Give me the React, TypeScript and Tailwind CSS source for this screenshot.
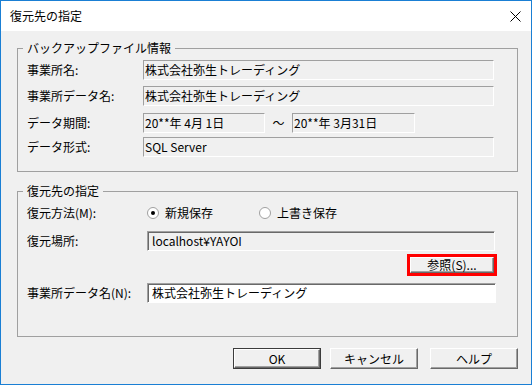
import React from 'react';

const fieldRo =
  'h-[20px] border border-t-[#a0a0a0] border-l-[#a0a0a0] border-r-white border-b-white bg-[#f0f0f0] pl-[1px] flex items-center text-[12px] leading-none';

const fieldSunken =
  'h-[20px] border border-t-[#a0a0a0] border-l-[#a0a0a0] border-r-white border-b-white shadow-[inset_1px_1px_0_#696969] pl-[4px] flex items-center text-[12px] leading-none';

function Group({ title, className, children }: { title: string; className: string; children: React.ReactNode }) {
  return (
    <div className={`relative border border-[#a0a0a0] ${className}`}>
      <span className="absolute -top-[9px] left-[5px] bg-[#f0f0f0] px-[4px] text-[12px] leading-[16px]">{title}</span>
      {children}
    </div>
  );
}

function Btn({ label, isDefault }: { label: string; isDefault?: boolean }) {
  return (
    <div className={`w-[88px] h-[21px] ${isDefault ? 'border border-[#3c3c3c]' : ''}`}>
      <button className="w-full h-full bg-[#f0f0f0] border border-t-white border-l-white border-r-[#696969] border-b-[#696969] shadow-[inset_-1px_-1px_0_#a0a0a0] text-[12px] leading-none flex items-center justify-center">
        {label}
      </button>
    </div>
  );
}

function Radio({ checked, label }: { checked?: boolean; label: string }) {
  return (
    <label className="flex items-center gap-[6px]">
      <span className="w-[12px] h-[12px] rounded-full border border-[#a0a0a0] bg-white flex items-center justify-center">
        {checked && <span className="w-[4px] h-[4px] rounded-full bg-black" />}
      </span>
      <span className="text-[12px]">{label}</span>
    </label>
  );
}

export default function App() {
  return (
    <div className="w-[532px] h-[385px] border border-[#1a7fd4] bg-[#f0f0f0] flex flex-col text-black font-['Noto_Sans_CJK_JP',sans-serif]">
      <div className="h-[30px] bg-white flex items-center justify-between pl-[9px] pr-[10px]">
        <span className="text-[12px]">復元先の指定</span>
        <svg width="11" height="11" viewBox="0 0 11 11" className="mt-[1px]">
          <path d="M0.5 0.5 L10.5 10.5 M10.5 0.5 L0.5 10.5" stroke="#000" strokeWidth="1" />
        </svg>
      </div>

      <div className="flex flex-col pl-[16px] pr-[13px]">
        <Group title="バックアップファイル情報" className="mt-[17px] h-[124px]">
          <div className="flex flex-col pl-[9px] pt-[11px] text-[12px]">
            <div className="flex items-center">
              <span className="w-[116px]">事業所名:</span>
              <div className={`${fieldRo} w-[351px]`}>株式会社弥生トレーディング</div>
            </div>
            <div className="flex items-center mt-[6px]">
              <span className="w-[116px]">事業所データ名:</span>
              <div className={`${fieldRo} w-[351px]`}>株式会社弥生トレーディング</div>
            </div>
            <div className="flex items-center mt-[7px]">
              <span className="w-[116px]">データ期間:</span>
              <div className={`${fieldRo} w-[122px]`}>20**年 4月 1日</div>
              <span className="w-[27px] text-center">～</span>
              <div className={`${fieldRo} w-[123px]`}>20**年 3月31日</div>
            </div>
            <div className="flex items-center mt-[4px]">
              <span className="w-[116px]">データ形式:</span>
              <div className={`${fieldRo} w-[351px]`}>SQL Server</div>
            </div>
          </div>
        </Group>

        <Group title="復元先の指定" className="mt-[19px] h-[146px]">
          <div className="flex flex-col pl-[9px] pt-[11px] text-[12px]">
            <div className="flex items-center h-[20px]">
              <span className="w-[120px]">復元方法(M):</span>
              <div className="w-[112px]">
                <Radio checked label="新規保存" />
              </div>
              <Radio label="上書き保存" />
            </div>
            <div className="flex items-center mt-[8px]">
              <span className="w-[120px]">復元場所:</span>
              <div className={`${fieldSunken} w-[348px] bg-[#f0f0f0]`}>localhost¥YAYOI</div>
            </div>
            <div className="flex justify-end mt-[3px] pr-[20px]">
              <div className="border-[3px] border-[#ff0000] w-[90px] h-[22px]">
                <button className="w-full h-full bg-[#f0f0f0] border border-t-white border-l-white border-r-[#696969] border-b-[#696969] shadow-[inset_-1px_-1px_0_#a0a0a0] text-[12px] leading-none flex items-center justify-center">
                  参照(S)...
                </button>
              </div>
            </div>
            <div className="flex items-center mt-[7px]">
              <span className="w-[120px]">事業所データ名(N):</span>
              <div className={`${fieldSunken} w-[349px] bg-white`}>株式会社弥生トレーディング</div>
            </div>
          </div>
        </Group>

        <div className="flex justify-end mt-[11px] gap-[9px]">
          <Btn label="OK" isDefault />
          <div className="mr-[3px]">
            <Btn label="キャンセル" />
          </div>
          <Btn label="ヘルプ" />
        </div>
      </div>
    </div>
  );
}
